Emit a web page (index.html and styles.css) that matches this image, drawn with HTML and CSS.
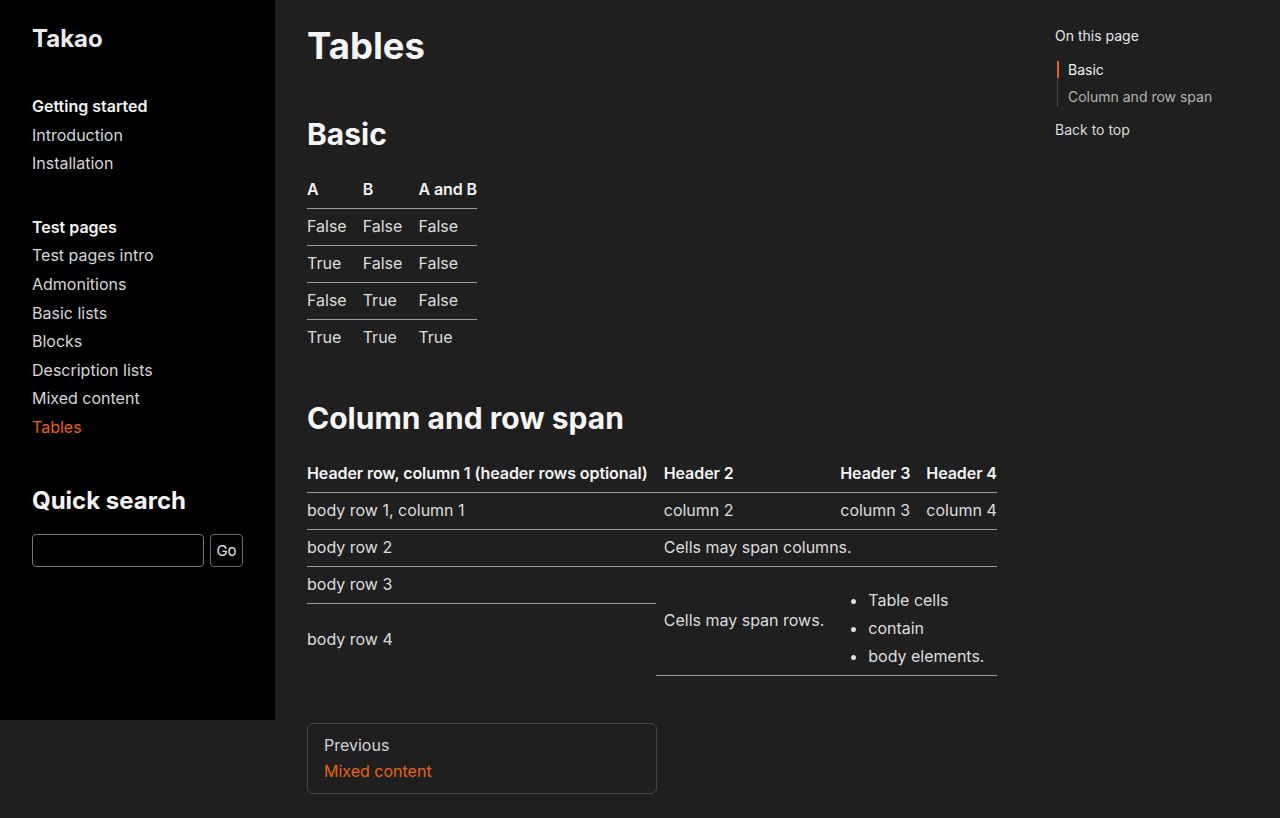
FILE: index.html
```html
<!DOCTYPE html>
<html>

<head>
    <title>Tables - Takao</title>
    <link rel="stylesheet" href="styles.css">
</head>

<body>
    <div class="sidebar">
        <div class="logo">Takao</div>

        <div class="nav-group">
            <div class="nav-caption">Getting started</div>
            <a class="nav-link" href="#">Introduction</a>
            <a class="nav-link" href="#">Installation</a>
        </div>

        <div class="nav-group">
            <div class="nav-caption">Test pages</div>
            <a class="nav-link" href="#">Test pages intro</a>
            <a class="nav-link" href="#">Admonitions</a>
            <a class="nav-link" href="#">Basic lists</a>
            <a class="nav-link" href="#">Blocks</a>
            <a class="nav-link" href="#">Description lists</a>
            <a class="nav-link" href="#">Mixed content</a>
            <a class="nav-link current" href="#">Tables</a>
        </div>

        <div class="search-title">Quick search</div>
        <form class="search-form">
            <input type="text" class="search-input">
            <button type="button" class="search-button">Go</button>
        </form>
    </div>

    <div class="main">
        <h1>Tables</h1>

        <h2 id="basic">Basic</h2>
        <table>
            <thead>
                <tr><th>A</th><th>B</th><th>A and B</th></tr>
            </thead>
            <tbody>
                <tr><td>False</td><td>False</td><td>False</td></tr>
                <tr><td>True</td><td>False</td><td>False</td></tr>
                <tr><td>False</td><td>True</td><td>False</td></tr>
                <tr><td>True</td><td>True</td><td>True</td></tr>
            </tbody>
        </table>

        <h2 id="span">Column and row span</h2>
        <table>
            <thead>
                <tr>
                    <th>Header row, column 1 (header rows optional)</th>
                    <th>Header 2</th>
                    <th>Header 3</th>
                    <th>Header 4</th>
                </tr>
            </thead>
            <tbody>
                <tr>
                    <td>body row 1, column 1</td>
                    <td>column 2</td>
                    <td>column 3</td>
                    <td>column 4</td>
                </tr>
                <tr>
                    <td>body row 2</td>
                    <td colspan="3">Cells may span columns.</td>
                </tr>
                <tr class="short-row">
                    <td>body row 3</td>
                    <td rowspan="2">Cells may span rows.</td>
                    <td rowspan="2" colspan="2">
                        <ul class="cell-list">
                            <li>Table cells</li>
                            <li>contain</li>
                            <li>body elements.</li>
                        </ul>
                    </td>
                </tr>
                <tr class="tall-row">
                    <td>body row 4</td>
                </tr>
            </tbody>
        </table>

        <a class="prev-card" href="#">
            <span class="prev-label">Previous</span>
            <span class="prev-title">Mixed content</span>
        </a>
    </div>

    <div class="toc">
        <div class="toc-title">On this page</div>
        <ul class="toc-list">
            <li class="active"><a href="#basic">Basic</a></li>
            <li><a href="#span">Column and row span</a></li>
        </ul>
        <a class="toc-top" href="#">Back to top</a>
    </div>
</body>

</html>
```

FILE: styles.css
```css
body {
    margin: 0;
    background-color: #1f1f1f;
    color: #dedede;
    font-family: Inter, "Noto Sans", sans-serif;
    font-size: 16px;
    line-height: 24px;
    display: flex;
    align-items: flex-start;
}

a {
    text-decoration: none;
    color: inherit;
}

/* sidebar */

.sidebar {
    width: 275px;
    height: 720px;
    box-sizing: border-box;
    flex-shrink: 0;
    padding: 24px 32px 0;
    background-color: #000;
}

.logo {
    font-size: 24px;
    line-height: 29px;
    font-weight: 700;
    color: #ececec;
    margin-bottom: 39px;
}

.nav-group {
    margin-bottom: 35px;
}

.nav-caption {
    font-weight: 600;
    color: #f4f4f4;
    line-height: 28.6px;
}

.nav-link {
    display: block;
    line-height: 28.6px;
    color: #d6d6d6;
}

.nav-link.current {
    color: #e8630f;
}

.search-title {
    font-size: 24px;
    line-height: 29px;
    font-weight: 700;
    color: #f4f4f4;
    margin: 44px 0 19px;
}

.search-form {
    display: flex;
    gap: 6px;
}

.search-input {
    width: 172px;
    height: 33px;
    box-sizing: border-box;
    background: #000;
    border: 1px solid #7a7a7a;
    border-radius: 4px;
    color: #ddd;
}

.search-button {
    width: 33px;
    height: 33px;
    box-sizing: border-box;
    padding: 0;
    background: #000;
    color: #e4e4e4;
    border: 1px solid #6a6a6a;
    border-radius: 4px;
    font-family: Inter, sans-serif;
    font-size: 15px;
}

/* main */

.main {
    width: 780px;
    box-sizing: border-box;
    padding: 0 48px 0 32px;
    flex-shrink: 0;
}

h1 {
    font-size: 36.5px;
    line-height: 46px;
    font-weight: 700;
    color: #f6f6f6;
    margin: 23px 0 46px;
}

h2 {
    font-size: 30px;
    line-height: 38px;
    font-weight: 700;
    color: #f6f6f6;
    margin: 43px 0 18px;
}

table {
    border-collapse: collapse;
}

th,
td {
    padding: 5px 8px 7px;
    text-align: left;
    vertical-align: middle;
    border-bottom: 1px solid #9a9a9a;
}

th {
    padding-top: 6px;
    font-weight: 600;
    color: #f4f4f4;
    letter-spacing: -0.08px;
}

th:first-child,
td:first-child {
    padding-left: 0;
}

th:last-child,
td:last-child {
    padding-right: 0;
}

tbody tr:last-child td {
    border-bottom: none;
}

.short-row {
    height: 37px;
}

.tall-row {
    height: 72px;
}

.cell-list {
    margin: 15px 0 0;
    padding-left: 28px;
}

.cell-list li + li {
    margin-top: 4px;
}

.prev-card {
    display: flex;
    flex-direction: column;
    width: 350px;
    box-sizing: border-box;
    margin-top: 47px;
    padding: 8px 16px 9px;
    border: 1px solid #474747;
    border-radius: 6px;
    line-height: 26px;
}

.prev-label {
    color: #d4d4d4;
}

.prev-title {
    color: #e8630f;
}

/* on this page */

.toc {
    padding-top: 25px;
    font-size: 14px;
    line-height: 22px;
}

.toc-title {
    color: #e8e8e8;
}

.toc-list {
    list-style: none;
    margin: 14px 0 0 2px;
    padding: 0 0 2px;
    border-left: 1px solid #4a4a4a;
}

.toc-list li {
    line-height: 17px;
    padding-left: 9px;
    margin-left: -1px;
    border-left: 2px solid transparent;
    color: #b4b4b4;
}

.toc-list li + li {
    margin-top: 10px;
}

.toc-list li.active {
    border-left-color: #e8630f;
    color: #f2f2f2;
}

.toc-top {
    display: block;
    margin-top: 12px;
    color: #dcdcdc;
}
```
